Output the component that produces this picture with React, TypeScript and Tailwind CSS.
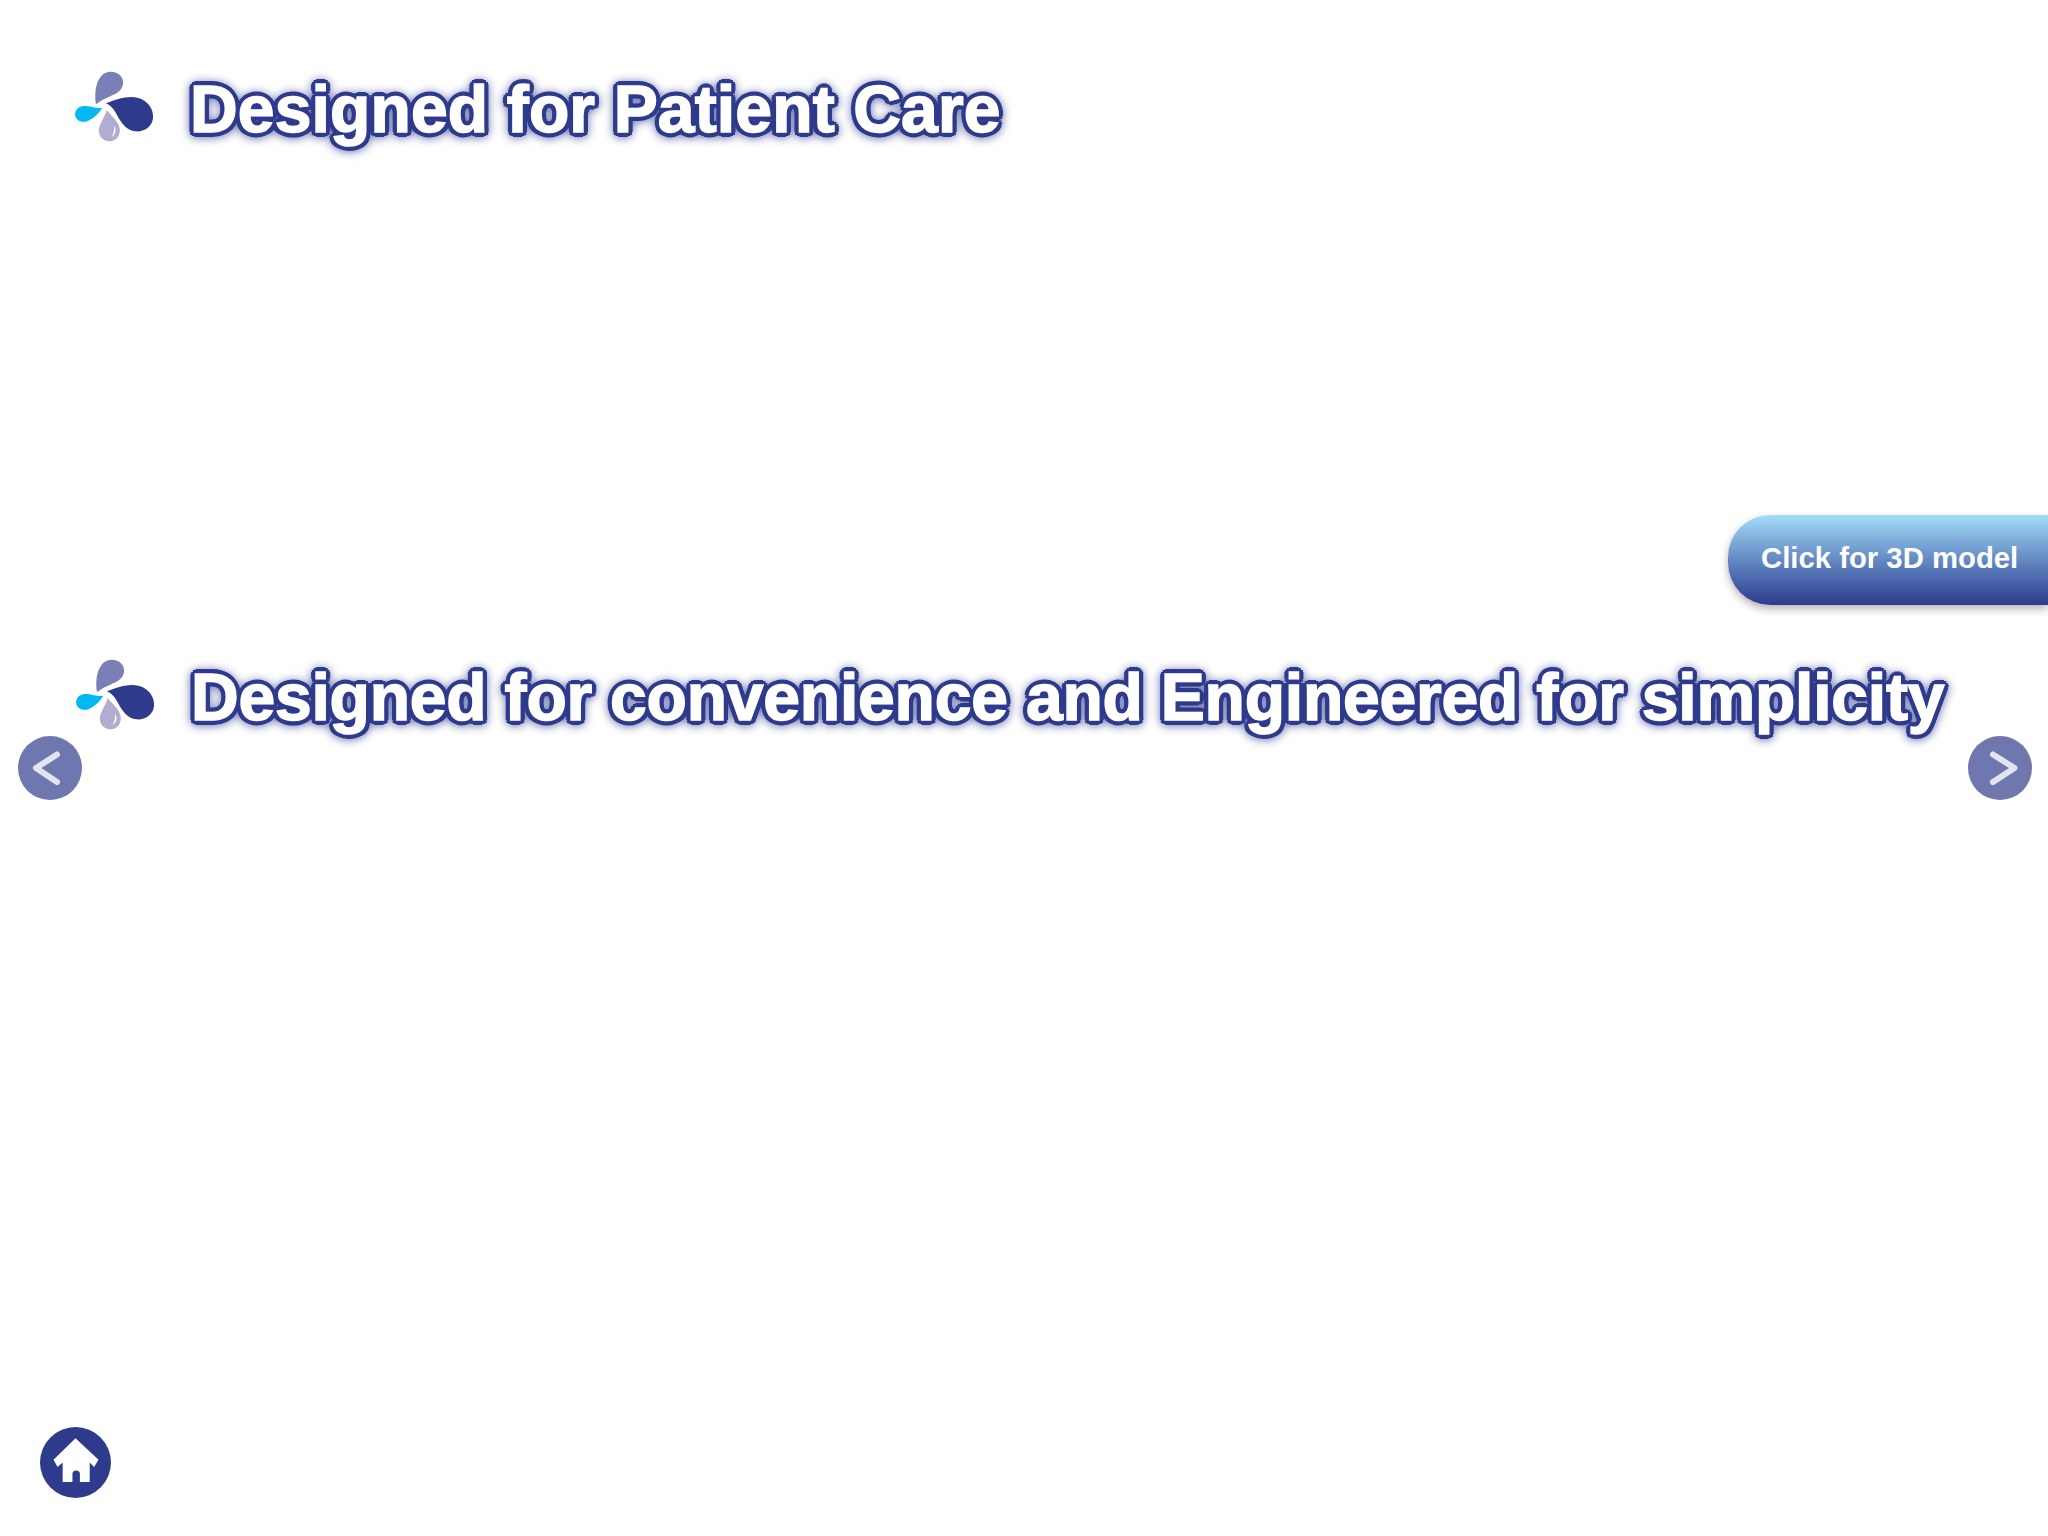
import React from 'react';

const NAVY = '#2e3a8c';

function Logo() {
  return (
    <svg viewBox="0 0 330 270" className="w-[110px] h-[90px] -mt-[11px] -mb-[7px] -mx-[15px] shrink-0">
      <path
        fill="#7a80b6"
        d="M108 133 C103 105 106 70 122 50 C135 32 165 30 180 46 C195 62 192 85 172 98 C150 110 125 118 108 133Z"
      />
      <path
        fill={NAVY}
        d="M138 130 C175 116 205 106 235 114 C265 122 282 150 279 175 C276 202 250 217 225 214 C195 210 180 182 168 160 C160 145 150 135 138 130Z"
      />
      <path
        fill="#00b9f2"
        d="M127 143 C110 147 90 137 70 138 C52 140 43 155 46 168 C50 184 70 190 85 182 C103 173 117 160 127 143Z"
      />
      <path
        fill="#b0add0"
        d="M140 150 C136 168 122 185 117 205 C113 226 128 244 148 244 C170 244 182 226 179 205 C176 185 155 168 140 150Z"
      />
      <path fill="#ffffff" d="M162 198 C170 208 168 222 155 231 C161 220 163 210 162 198Z" />
    </svg>
  );
}

function Heading({ text, className }: { text: string; className: string }) {
  return (
    <h1
      className={`ml-[35px] mt-[3px] text-[66px] leading-[72px] font-bold text-white whitespace-nowrap [-webkit-text-stroke:1.5px_#ffffff] [text-shadow:5px_0_0_#2e3a8c,4.33px_2.5px_0_#2e3a8c,2.5px_4.33px_0_#2e3a8c,0_5px_0_#2e3a8c,-2.5px_4.33px_0_#2e3a8c,-4.33px_2.5px_0_#2e3a8c,-5px_0_0_#2e3a8c,-4.33px_-2.5px_0_#2e3a8c,-2.5px_-4.33px_0_#2e3a8c,0_-5px_0_#2e3a8c,2.5px_-4.33px_0_#2e3a8c,4.33px_-2.5px_0_#2e3a8c] [filter:drop-shadow(0_1px_5px_rgba(46,58,140,0.7))] ${className}`}
    >
      {text}
    </h1>
  );
}

function ArrowButton({ dir }: { dir: 'left' | 'right' }) {
  return (
    <button className="w-16 h-16 rounded-full bg-[#6e78ae] flex items-center justify-center">
      <svg viewBox="0 0 64 64" className="w-16 h-16">
        <polyline
          points={dir === 'left' ? '39,18.5 18,32 39,46' : '25,18.5 46.5,32 25,46'}
          fill="none"
          stroke="#e2e4f0"
          strokeWidth="6"
          strokeLinecap="round"
          strokeLinejoin="round"
        />
      </svg>
    </button>
  );
}

export default function App() {
  return (
    <div className="w-[2048px] h-[1536px] bg-white flex flex-col overflow-hidden font-['Liberation_Sans',Arial,sans-serif]">
      <div className="mt-[71px] h-[72px] pl-[75px] flex items-center">
        <Logo />
        <Heading className="tracking-[0.15px]" text="Designed for Patient Care" />
      </div>

      <button className="mt-[372px] self-end w-[320px] h-[90px] rounded-l-[42px] pl-[33px] pb-[4px] text-left text-[29.3px] font-bold text-white bg-gradient-to-b from-[#a4dcf9] to-[#2e3a8c] shadow-[0_4px_8px_rgba(0,0,0,0.3)]">
        Click for 3D model
      </button>

      <div className="mt-[54px] h-[72px] pl-[76px] flex items-center">
        <Logo />
        <Heading className="-tracking-[0.2px]" text="Designed for convenience and Engineered for simplicity" />
      </div>

      <div className="mt-[5px] pl-[17.5px] pr-[16px] flex justify-between">
        <ArrowButton dir="left" />
        <ArrowButton dir="right" />
      </div>

      <button className="mt-auto mb-[38px] ml-[40px] w-[71px] h-[71px] rounded-full bg-[#2e3a8c] flex items-center justify-center">
        <svg viewBox="0 0 210 210" className="w-[71px] h-[71px]">
          <path
            fill="#ffffff"
            d="M105 33 L173 97 L160 118 L147 105 L147 163 L118 163 L118 140 A11 11 0 0 0 96 140 L96 163 L67 163 L67 105 L52 118 L40 97Z"
          />
        </svg>
      </button>
    </div>
  );
}
